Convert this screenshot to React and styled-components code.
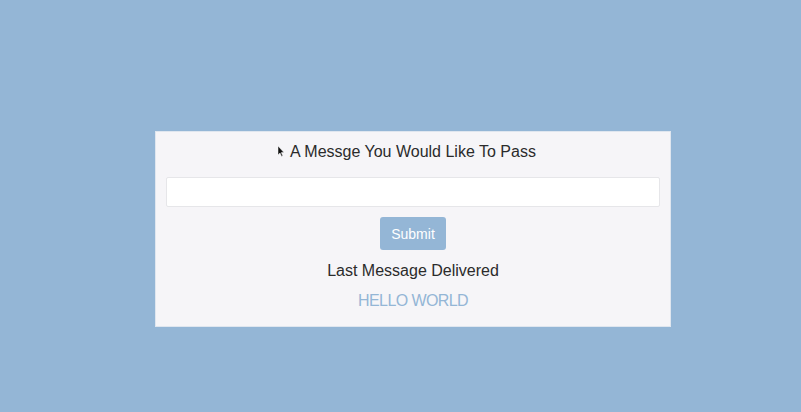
import styled, { createGlobalStyle } from "styled-components"

const GlobalStyle = createGlobalStyle`
  html, body {
    margin: 0;
    padding: 0;
    background: #94b6d6;
    font-family: "Liberation Sans", Arial, sans-serif;
  }
`

export default function App() {
  return (
    <Page>
      <GlobalStyle />
      <Card>
        <Heading>
          <Pointer viewBox="0 0 8 11">
            <path d="M1 0 L1 9 L3 7 L4.6 10.4 L5.8 9.8 L4.3 6.6 L7 6.6 Z" fill="#111" stroke="#fff" strokeWidth="0.5" />
          </Pointer>
          A Messge You Would Like To Pass
        </Heading>
        <MessageInput type="text" />
        <SubmitButton>Submit</SubmitButton>
        <Label>Last Message Delivered</Label>
        <Message>HELLO WORLD</Message>
      </Card>
    </Page>
  )
}

const Page = styled.div`
  width: 801px;
  height: 412px;
  box-sizing: border-box;
  display: flex;
  justify-content: center;
  align-items: flex-start;
  padding: 131px 0 0 25px;
`
const Card = styled.div`
  width: 516px;
  box-sizing: border-box;
  background: #f6f5f8;
  border: 1px solid #dfe6ef;
  padding: 9px 10px 14px;
  display: flex;
  flex-direction: column;
  align-items: center;
  color: #2b2b2b;
`
const Heading = styled.h2`
  position: relative;
  margin: 0;
  font-size: 16px;
  font-weight: 400;
  line-height: 22px;
`
const Pointer = styled.svg`
  position: absolute;
  left: -13px;
  top: 5px;
  width: 8px;
  height: 11px;
`
const MessageInput = styled.input`
  align-self: stretch;
  margin-top: 14px;
  height: 30px;
  box-sizing: border-box;
  border: 1px solid #e6e6e9;
  border-radius: 2px;
  background: #fff;
  outline: none;
`
const SubmitButton = styled.button`
  margin-top: 10px;
  width: 66px;
  height: 33px;
  border: none;
  border-radius: 3px;
  background: #94b6d6;
  color: #fff;
  font-family: "Liberation Sans", Arial, sans-serif;
  font-size: 14px;
`
const Label = styled.div`
  margin-top: 10px;
  font-size: 16px;
  line-height: 22px;
`
const Message = styled.div`
  margin-top: 8px;
  font-size: 16px;
  line-height: 22px;
  letter-spacing: -0.6px;
  color: #94b6d6;
`
